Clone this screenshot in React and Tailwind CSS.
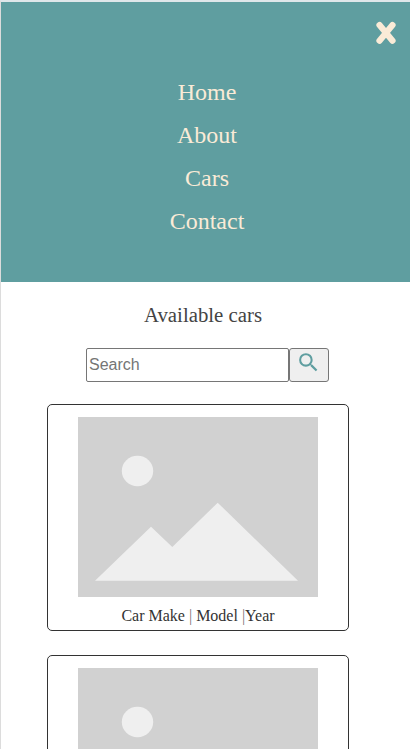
const links = ['Home', 'About', 'Cars', 'Contact'];

function PlaceholderImage() {
  return (
    <svg className="block h-[180px] w-[240px]" viewBox="0 0 240 180" aria-hidden="true">
      <rect width="240" height="180" fill="#d1d1d1" />
      <ellipse cx="59.5" cy="54" rx="15.7" ry="15.2" fill="#efefef" />
      <path d="M17 163.8 L73 109.7 L94.3 130 L139.7 85.7 L220 163.8 Z" fill="#efefef" />
    </svg>
  );
}

function CarCard() {
  return (
    <article className="flex h-[227px] w-[302px] shrink-0 flex-col items-center rounded-[5px] border border-[#333] pt-3">
      <PlaceholderImage />
      <p className="mt-[10px] text-base leading-[18px] whitespace-pre text-[#333]">
        Car Make <span className="text-[#777]">|</span> Model <span className="text-[#777]">|</span>Year
      </p>
    </article>
  );
}

export default function App() {
  return (
    <div className="h-[749px] w-[410px] overflow-hidden border-t-2 border-l border-t-[#dfe7ea] border-l-[#dcdcdc] bg-white font-['Liberation_Serif','Times_New_Roman',serif]">
      <header className="flex h-[280px] flex-col bg-[#5f9ea0] text-[#faebd7]">
        <button className="mt-[19px] mr-[13px] self-end" aria-label="Close menu">
          <svg className="block" width="22" height="24" viewBox="0 0 22 24" fill="none" stroke="#faebd7" strokeWidth="6.2" strokeLinecap="round">
            <path d="M4.5 4.1 L17.5 19.7 M17.5 4.1 L4.5 19.7" />
          </svg>
        </button>
        <nav className="mt-[34px] flex flex-col items-center gap-4 pl-[3px] text-2xl leading-[27px]">
          {links.map((label) => (
            <a key={label}>{label}</a>
          ))}
        </nav>
      </header>
      <main className="flex flex-col">
        <h1 className="mt-[21px] pr-[5px] text-center text-[20.8px] leading-6 text-[#444]">Available cars</h1>
        <form className="mt-[21px] ml-[85px] flex h-[34px]">
          <input
            className="w-[203px] rounded-[2px] border border-[#767676] px-[2px] font-['Liberation_Sans',Arial,sans-serif] text-base placeholder:text-[#757575]"
            placeholder="Search"
          />
          <button type="button" className="flex w-10 justify-center rounded-[3px] border border-[#767676] bg-[#efefef] pt-px pr-px" aria-label="Search">
            <svg className="block" width="25" height="25" viewBox="0 0 24 24" fill="#5f9ea0">
              <path d="M15.5 14h-.79l-.28-.27A6.47 6.47 0 0 0 16 9.5 6.5 6.5 0 1 0 9.5 16c1.61 0 3.09-.59 4.23-1.57l.27.28v.79l5 4.99L20.49 19zm-6 0C7.01 14 5 11.99 5 9.5S7.01 5 9.5 5 14 7.01 14 9.5 11.99 14 9.5 14" />
            </svg>
          </button>
        </form>
        <section className="mt-[22px] ml-[46px] flex flex-col gap-6">
          <CarCard />
          <CarCard />
        </section>
      </main>
    </div>
  );
}
